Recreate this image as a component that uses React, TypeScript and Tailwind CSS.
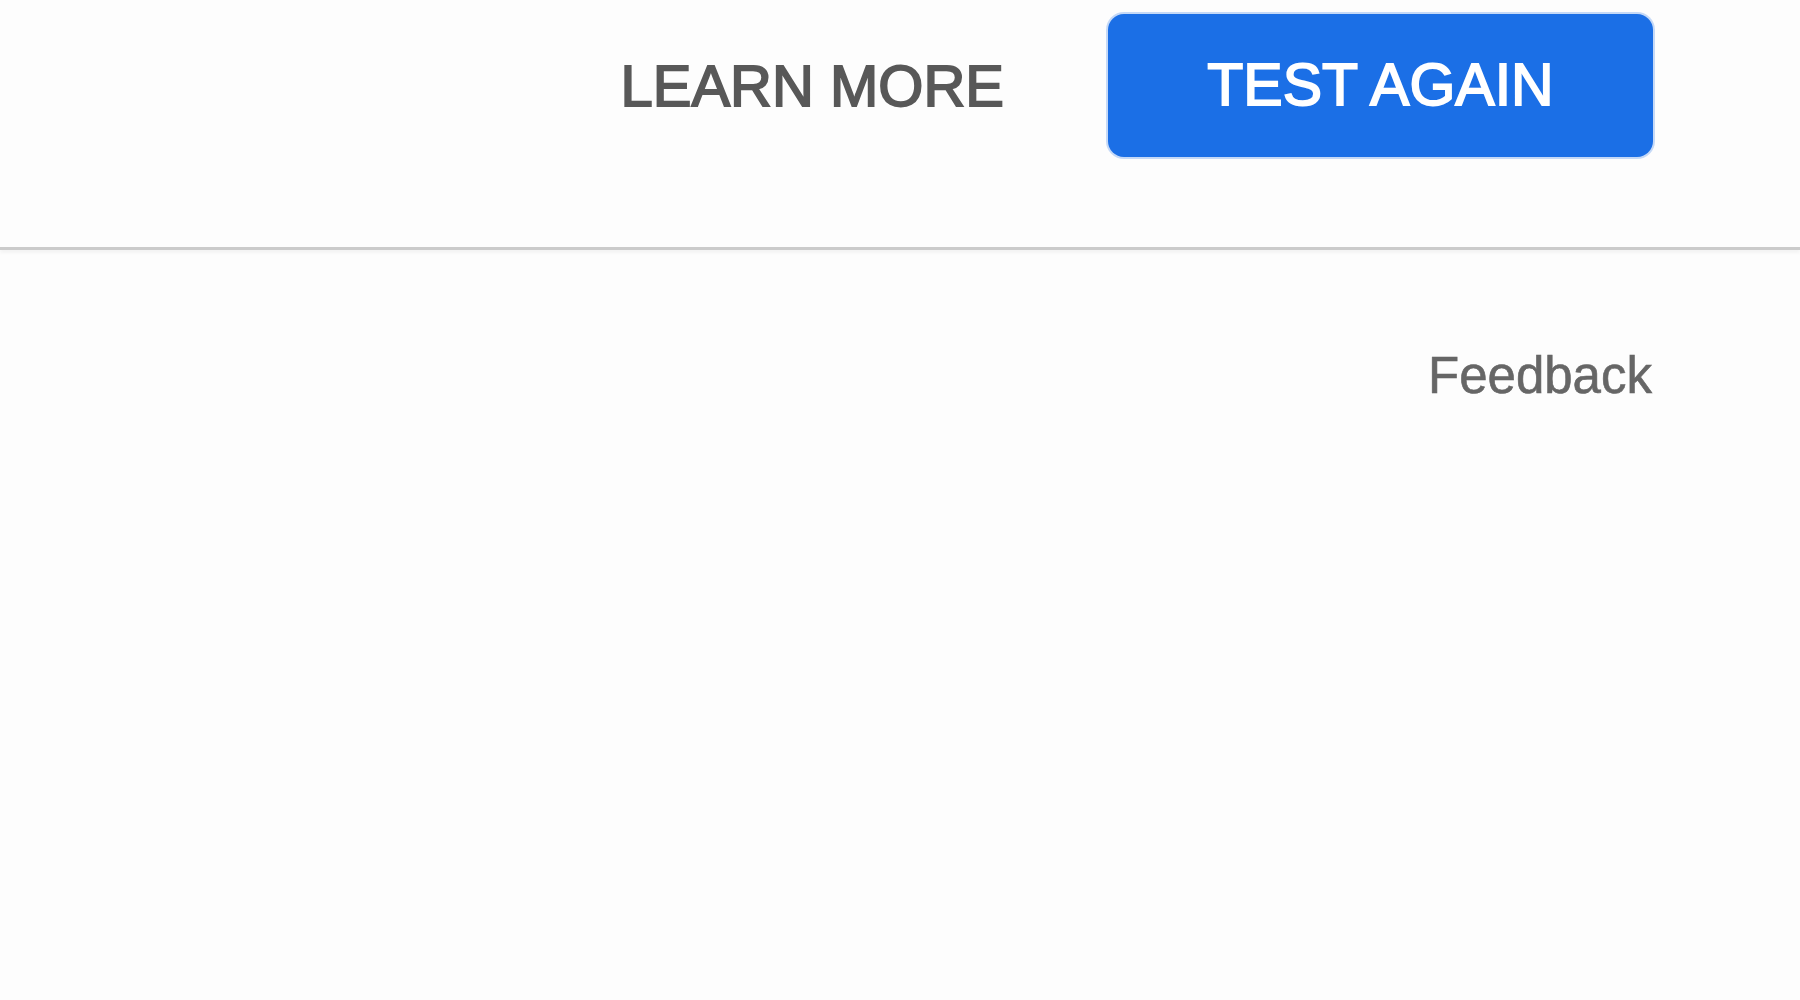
import React from "react";

export default function App() {
  return (
    <div className="min-h-screen w-full bg-[#fdfdfd]" style={{ fontFamily: '"Liberation Sans", Arial, sans-serif' }}>
      <div className="flex items-center justify-end gap-[104px] pt-[14px] pb-[90px] pr-[147px] border-b-[3px] border-[#cbcbcb] shadow-[0_3px_3px_rgba(0,0,0,0.04)]">
        <span className="text-[58px] leading-none text-[#585858] [-webkit-text-stroke-width:1.8px] [-webkit-text-stroke-color:#585858]">LEARN MORE</span>
        <button className="h-[143px] w-[545px] rounded-[16px] bg-[#1b6fe6] ring-2 ring-[#c5d9f7] flex items-center justify-center">
          <span className="text-[59px] leading-none text-white [-webkit-text-stroke-width:1.8px] [-webkit-text-stroke-color:#ffffff]">TEST AGAIN</span>
        </button>
      </div>
      <div className="flex justify-end pr-[148px] mt-[100px]">
        <span className="text-[51px] leading-none text-[#666666] [-webkit-text-stroke-width:0.6px] [-webkit-text-stroke-color:#666666]">Feedback</span>
      </div>
    </div>
  );
}
